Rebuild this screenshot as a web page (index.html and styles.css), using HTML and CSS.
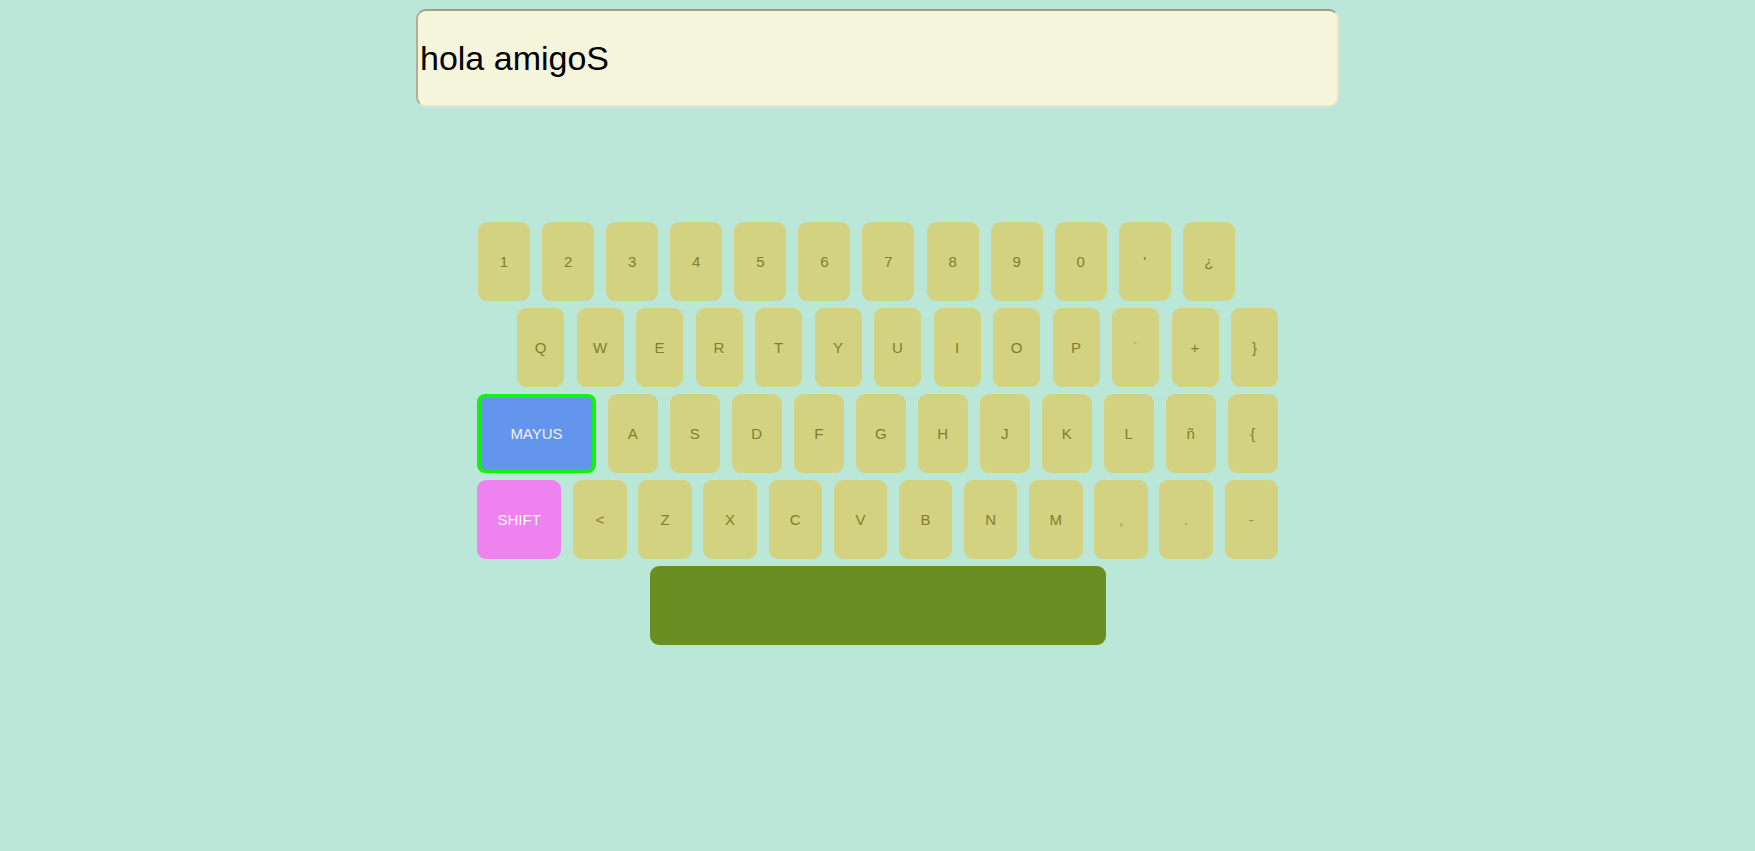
FILE: index.html
```html
<!DOCTYPE html>
<html lang="es">
<head>
<meta charset="utf-8">
<title>Teclado</title>
<link rel="stylesheet" href="styles.css">
</head>
<body>
<div class="display">hola amigoS</div>
<div class="keyboard">
  <div class="row row1">
    <div class="key">1</div><div class="key">2</div><div class="key">3</div><div class="key">4</div><div class="key">5</div><div class="key">6</div><div class="key">7</div><div class="key">8</div><div class="key">9</div><div class="key">0</div><div class="key">'</div><div class="key">¿</div>
  </div>
  <div class="row row2">
    <div class="key">Q</div><div class="key">W</div><div class="key">E</div><div class="key">R</div><div class="key">T</div><div class="key">Y</div><div class="key">U</div><div class="key">I</div><div class="key">O</div><div class="key">P</div><div class="key light">´</div><div class="key">+</div><div class="key">}</div>
  </div>
  <div class="row row3">
    <div class="key mayus">MAYUS</div>
    <div class="key">A</div><div class="key">S</div><div class="key">D</div><div class="key">F</div><div class="key">G</div><div class="key">H</div><div class="key">J</div><div class="key">K</div><div class="key">L</div><div class="key">ñ</div><div class="key">{</div>
  </div>
  <div class="row row4">
    <div class="key shift">SHIFT</div>
    <div class="key">&lt;</div><div class="key">Z</div><div class="key">X</div><div class="key">C</div><div class="key">V</div><div class="key">B</div><div class="key">N</div><div class="key">M</div><div class="key light">,</div><div class="key light">.</div><div class="key light">-</div>
  </div>
  <div class="space"></div>
</div>
</body>
</html>
```
FILE: styles.css
```css
html, body {
  margin: 0;
  padding: 0;
}
body {
  background: #bae7d8;
  padding-top: 9px;
  font-family: "Liberation Sans", Arial, sans-serif;
}
.display {
  box-sizing: border-box;
  width: 923px;
  height: 98px;
  margin: 0 auto;
  background: #f5f5dc;
  border: 2px solid #ebe4c8;
  border-top-color: #a39d8a;
  border-left-color: #b3ad98;
  border-radius: 10px;
  padding-left: 2px;
  display: flex;
  align-items: center;
  font-size: 34px;
  color: #000;
}
.keyboard {
  width: 801px;
  margin: 115px auto 0;
  display: flex;
  flex-direction: column;
  gap: 7px;
}
.row {
  display: flex;
  justify-content: space-between;
}
.key {
  box-sizing: border-box;
  height: 79px;
  border-radius: 9px;
  background: #d2d281;
  color: #7f7f2e;
  font-size: 15px;
  display: flex;
  align-items: center;
  justify-content: center;
}
.key.light {
  color: #9a9a4c;
}
.row1 {
  width: 757px;
  margin-left: 1px;
}
.row1 .key { width: 52px; }
.row2 {
  margin-left: 40px;
}
.row2 .key { width: 47px; }
.row3 .key { width: 50.5px; }
.row4 .key { width: 53.4px; }
.row3 .key.mayus {
  width: 119px;
  background: #6495ed;
  border: 4px solid #14f014;
  border-radius: 8px;
  color: #f2f2f2;
}
.row4 .key.shift {
  width: 84.4px;
  background: #ee82ee;
  color: #f8f8f8;
}
.space {
  align-self: center;
  width: 456px;
  height: 79px;
  background: #6b8e23;
  border-radius: 9px;
}
```
